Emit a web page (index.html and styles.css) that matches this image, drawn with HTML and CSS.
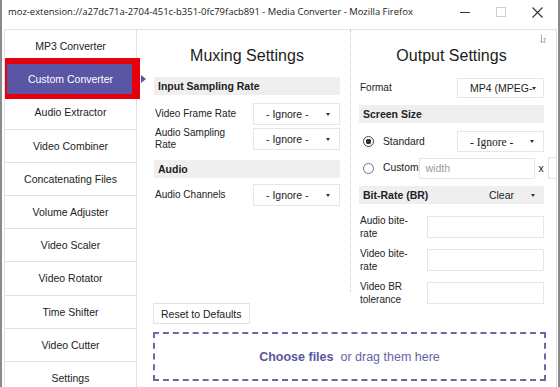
FILE: index.html
```
<!DOCTYPE html>
<html>

<head>
    <meta charset="utf-8" />
    <title>Media Converter</title>
    <link rel="stylesheet" href="styles.css">
</head>

<body>
    <div class="window">
        <div class="titlebar">
            <span class="title">moz-extension://a27dc71a-2704-451c-b351-0fc79facb891 - Media Converter - Mozilla Firefox</span>
            <div class="controls">
                <span class="ctl">
                    <svg width="10" height="10" viewBox="0 0 10 10"><path d="M0 5.5H10" stroke="#333" stroke-width="1" /></svg>
                </span>
                <span class="ctl">
                    <svg width="10" height="10" viewBox="0 0 10 10"><rect x="0.5" y="0.5" width="9" height="9" fill="none" stroke="#cfcfcf" /></svg>
                </span>
                <span class="ctl">
                    <svg width="11" height="11" viewBox="0 0 11 11"><path d="M0.5 0.5L10.5 10.5M10.5 0.5L0.5 10.5" stroke="#333" stroke-width="1.1" /></svg>
                </span>
            </div>
        </div>

        <div class="app">
            <nav class="sidebar">
                <div class="item">MP3 Converter</div>
                <div class="item active">Custom Converter</div>
                <div class="item">Audio Extractor</div>
                <div class="item">Video Combiner</div>
                <div class="item">Concatenating Files</div>
                <div class="item">Volume Adjuster</div>
                <div class="item">Video Scaler</div>
                <div class="item">Video Rotator</div>
                <div class="item">Time Shifter</div>
                <div class="item">Video Cutter</div>
                <div class="item">Settings</div>
            </nav>

            <main class="main">
                <div class="columns">
                    <section class="col muxing">
                        <h2>Muxing Settings</h2>
                        <div class="bar">Input Sampling Rate</div>
                        <div class="row first">
                            <span class="label">Video Frame Rate</span>
                            <div class="select"><span>- Ignore -</span><b class="caret"></b></div>
                        </div>
                        <div class="row">
                            <span class="label">Audio Sampling Rate</span>
                            <div class="select"><span>- Ignore -</span><b class="caret"></b></div>
                        </div>
                        <div class="bar audio">Audio</div>
                        <div class="row channels">
                            <span class="label">Audio Channels</span>
                            <div class="select"><span>- Ignore -</span><b class="caret"></b></div>
                        </div>
                    </section>

                    <section class="col output">
                        <svg class="sort-icon" width="6" height="10" viewBox="0 0 6 10">
                            <path d="M1.5 0.5V8.5M0.5 7L1.5 8.5L2.5 7M3.5 4.5H5.5L3.5 8.5H5.5" fill="none" stroke="#999" stroke-width="0.8" />
                        </svg>
                        <h2>Output Settings</h2>
                        <div class="row format">
                            <span class="label">Format</span>
                            <div class="select"><span>MP4 (MPEG-</span><b class="caret"></b></div>
                        </div>
                        <div class="bar screen">Screen Size</div>
                        <div class="row radio-row standard">
                            <span class="radio checked"></span>
                            <span class="label">Standard</span>
                            <div class="select serif"><span>- Ignore -</span><b class="caret"></b></div>
                        </div>
                        <div class="row radio-row custom">
                            <span class="radio"></span>
                            <span class="label">Custom</span>
                            <input class="field width" type="text" placeholder="width">
                            <span class="times">x</span>
                            <input class="field height" type="text">
                        </div>
                        <div class="bar bitrate">
                            <span>Bit-Rate (BR)</span>
                            <span class="clear">Clear <b class="caret"></b></span>
                        </div>
                        <div class="row rate first-rate">
                            <span class="label">Audio bite-rate</span>
                            <input class="field" type="text">
                        </div>
                        <div class="row rate">
                            <span class="label">Video bite-rate</span>
                            <input class="field" type="text">
                        </div>
                        <div class="row rate">
                            <span class="label">Video BR tolerance</span>
                            <input class="field" type="text">
                        </div>
                    </section>
                </div>

                <div class="footer">
                    <button class="reset">Reset to Defaults</button>
                    <div class="dropzone"><b>Choose files</b>&nbsp;&nbsp;or drag them here</div>
                </div>
            </main>
        </div>
    </div>
</body>

</html>
```

FILE: styles.css
```
/* base */

* {
    box-sizing: border-box;
}

html,
body {
    margin: 0;
}

body {
    width: 560px;
    height: 387px;
    overflow: hidden;
    background: #fff;
    color: #222;
    font-family: "Liberation Sans", Arial, sans-serif;
}

/* window frame */

.window {
    height: 387px;
    display: flex;
    flex-direction: column;
    border-left: 2px solid #8a8a8a;
    border-right: 2px solid #8a8a8a;
}

.titlebar {
    height: 29px;
    flex: none;
    display: flex;
    align-items: flex-start;
    padding-left: 6px;
}

.title {
    margin-top: 5px;
    line-height: 14px;
    font-family: "Open Sans", sans-serif;
    font-size: 9.45px;
    color: #1a1a1a;
    white-space: nowrap;
}

.controls {
    margin-left: auto;
    margin-right: 3px;
    display: flex;
}

.ctl {
    width: 36px;
    height: 24px;
    display: flex;
    align-items: center;
    justify-content: center;
}

.app {
    flex: 1;
    min-height: 0;
    display: flex;
    margin: 0 1px 0 2px;
    border-top: 1px solid #e4e4e4;
    border-left: 1px solid #e4e4e4;
    border-right: 1px solid #dedede;
    overflow: hidden;
}

/* sidebar */

.sidebar {
    width: 132px;
    flex: none;
    border-right: 1px solid #e2e2e2;
}

.item {
    position: relative;
    height: 33.2px;
    line-height: 32px;
    border-bottom: 1px solid #e0e0e0;
    text-align: center;
    font-size: 10.5px;
    color: #222;
}

.item.active {
    background: #5a55a4;
    color: #fff;
}

/* red highlight box drawn over the active tab */
.item.active::after {
    content: "";
    position: absolute;
    left: -5px;
    right: -4px;
    top: -5px;
    bottom: -4px;
    border: solid #e6000c;
    border-width: 6px 8px 5px 7px;
}

.item.active::before {
    content: "";
    position: absolute;
    left: 136px;
    top: 12px;
    border-left: 5px solid #5a55a4;
    border-top: 4px solid transparent;
    border-bottom: 4px solid transparent;
}

/* main panel */

.main {
    flex: 1;
    min-width: 0;
    display: flex;
    flex-direction: column;
}

.columns {
    height: 262px;
    flex: none;
    display: flex;
}

.col {
    padding-top: 4px;
}

.muxing {
    width: 213px;
    flex: none;
    padding-left: 17px;
    padding-right: 10px;
}

.output {
    position: relative;
    flex: 1;
    min-width: 0;
    padding-left: 8px;
    padding-right: 12px;
    border-left: 1px dotted #c9c9c9;
}

.sort-icon {
    position: absolute;
    top: 4px;
    right: 10px;
}

h2 {
    margin: 0;
    line-height: 43px;
    font-size: 16px;
    font-weight: normal;
    text-align: center;
    color: #1c1c1c;
}

.bar {
    height: 18px;
    line-height: 18px;
    padding-left: 4px;
    background: #efefef;
    font-size: 10.5px;
    font-weight: bold;
}

.bar.audio {
    margin-top: 9px;
}

.bar.screen {
    margin-top: 7px;
}

.bar.bitrate {
    margin-top: 7px;
    display: flex;
}

.clear {
    margin-left: auto;
    display: flex;
    align-items: center;
    font-weight: normal;
    padding-right: 9px;
}

.clear .caret {
    margin-left: 17px;
}

/* form rows */

.row {
    display: flex;
    align-items: center;
    font-size: 10px;
}

.label {
    flex: 1;
    line-height: 12px;
    padding-left: 1px;
}

.muxing .label {
    padding-right: 8px;
}

.muxing .row {
    margin-top: 2px;
}

.muxing .row.first {
    margin-top: 8px;
}

.muxing .row.channels {
    margin-top: 6px;
}

.select {
    width: 87px;
    height: 22px;
    flex: none;
    display: flex;
    align-items: center;
    padding: 0 9px 0 12px;
    border: 1px solid #e6e6e6;
    background: #fff;
    font-size: 10.5px;
    overflow: hidden;
    white-space: nowrap;
}

.select span {
    flex: 1;
}

.select.serif {
    font-family: "Liberation Serif", serif;
    font-size: 11.5px;
    height: 21px;
}

.caret {
    flex: none;
    width: 0;
    height: 0;
    border-left: 2.5px solid transparent;
    border-right: 2.5px solid transparent;
    border-top: 3px solid #333;
}

.row.format {
    margin-top: 1px;
}

.row.format .select {
    height: 20px;
    padding-right: 10px;
}

.radio-row .label {
    flex: none;
    font-size: 10.3px;
}

.radio {
    width: 11px;
    height: 11px;
    flex: none;
    margin: 0 8px 0 4px;
    border: 1px solid #777;
    border-radius: 50%;
    background: #fff;
}

.radio.checked {
    border-color: #444;
    background: radial-gradient(circle, #333 0 2.6px, #fff 3px);
}

.row.standard {
    margin-top: 8px;
}

.row.standard .select {
    margin-left: auto;
}

.row.custom {
    margin-top: 5px;
}

.field {
    height: 22px;
    border: 1px solid #e6e6e6;
    background: #fff;
    font-family: "Liberation Sans", Arial, sans-serif;
    font-size: 10.5px;
    padding: 0 5px;
    outline: none;
}

.field::placeholder {
    color: #9a9a9a;
}

.field.width {
    width: 116px;
    height: 21px;
    flex: none;
    margin-left: 1px;
}

.times {
    flex: none;
    margin: 0 4px 0 3px;
    font-size: 10.5px;
}

.field.height {
    width: 60px;
    flex: none;
}

.row.rate {
    margin-top: 6px;
}

.row.rate.first-rate {
    margin-top: 9px;
}

.row.rate .label {
    flex: none;
    width: 64px;
    line-height: 13px;
    padding-top: 1px;
}

.row.rate .field {
    width: 117px;
    margin-left: auto;
}

/* footer */

.footer {
    display: flex;
    flex-direction: column;
    padding: 0 10px 0 16px;
}

.reset {
    align-self: flex-start;
    margin-top: 11px;
    height: 21px;
    padding: 0 7px;
    border: 1px solid #e2e2e2;
    background: #fff;
    font-family: "Liberation Sans", Arial, sans-serif;
    font-size: 10.5px;
    color: #222;
}

.dropzone {
    margin-top: 8px;
    height: 49px;
    display: flex;
    align-items: center;
    justify-content: center;
    border: 2px dashed #6b67a9;
    font-size: 12.5px;
    color: #6764a8;
}

.dropzone b {
    color: #5a57a0;
}
```
